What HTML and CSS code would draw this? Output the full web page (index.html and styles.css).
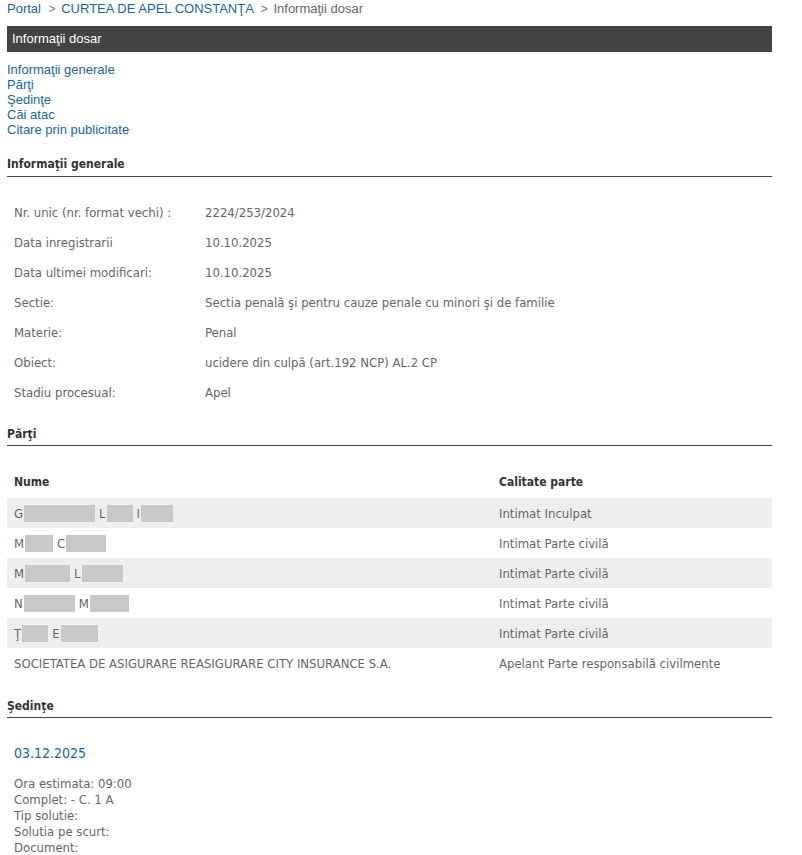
FILE: index.html
```html
<!DOCTYPE html>
<html lang="ro">
<head>
<meta charset="utf-8">
<title>Informaţii dosar</title>
<link rel="stylesheet" href="styles.css">
</head>
<body>
<div class="page">
  <div class="breadcrumb">
    <a href="#">Portal</a> <span class="sep">&gt;</span> <a href="#">CURTEA DE APEL CONSTANŢA</a> <span class="sep">&gt;</span> <span class="current">Informaţii dosar</span>
  </div>
  <div class="titlebar">Informaţii dosar</div>
  <ul class="toc">
    <li><a href="#">Informaţii generale</a></li>
    <li><a href="#">Părţi</a></li>
    <li><a href="#">Şedinţe</a></li>
    <li><a href="#">Căi atac</a></li>
    <li><a href="#">Citare prin publicitate</a></li>
  </ul>

  <h2 class="section-title first">Informaţii generale</h2>
  <table class="info">
    <tr><td class="label">Nr. unic (nr. format vechi) :</td><td>2224/253/2024</td></tr>
    <tr><td class="label">Data inregistrarii</td><td>10.10.2025</td></tr>
    <tr><td class="label">Data ultimei modificari:</td><td>10.10.2025</td></tr>
    <tr><td class="label">Sectie:</td><td>Sectia penală şi pentru cauze penale cu minori şi de familie</td></tr>
    <tr><td class="label">Materie:</td><td>Penal</td></tr>
    <tr><td class="label">Obiect:</td><td>ucidere din culpă (art.192 NCP) AL.2 CP</td></tr>
    <tr><td class="label">Stadiu procesual:</td><td>Apel</td></tr>
  </table>

  <h2 class="section-title">Părţi</h2>
  <table class="parti">
    <thead>
      <tr><th class="col-name">Nume</th><th>Calitate parte</th></tr>
    </thead>
    <tbody>
      <tr><td>G<span class="red w71"></span>L<span class="red w26"></span>I<span class="red w32"></span></td><td>Intimat Inculpat</td></tr>
      <tr><td>M<span class="red w28"></span>C<span class="red w40"></span></td><td>Intimat Parte civilă</td></tr>
      <tr><td>M<span class="red w45"></span>L<span class="red w41"></span></td><td>Intimat Parte civilă</td></tr>
      <tr><td>N<span class="red w51"></span>M<span class="red w39"></span></td><td>Intimat Parte civilă</td></tr>
      <tr><td>Ţ<span class="red w26"></span>E<span class="red w37"></span></td><td>Intimat Parte civilă</td></tr>
      <tr><td>SOCIETATEA DE ASIGURARE REASIGURARE CITY INSURANCE S.A.</td><td>Apelant Parte responsabilă civilmente</td></tr>
    </tbody>
  </table>

  <h2 class="section-title">Şedinţe</h2>
  <div class="sedinta">
    <div class="date">03.12.2025</div>
    <div class="details">
      Ora estimata: 09:00<br>
      Complet: - C. 1 A<br>
      Tip solutie:<br>
      Solutia pe scurt:<br>
      Document:
    </div>
  </div>
</div>
</body>
</html>
```

FILE: styles.css
```css
html, body {
  margin: 0;
  padding: 0;
  background: #fff;
}

.page {
  width: 765px;
  padding: 0 0 0 7px;
  font-family: "DejaVu Sans Condensed", "DejaVu Sans", sans-serif;
  font-stretch: condensed;
  color: #666;
}

a {
  color: #1a64a0;
  text-decoration: none;
}

.breadcrumb {
  font-family: "Liberation Sans", Arial, sans-serif;
  font-stretch: normal;
  font-size: 13px;
  line-height: 18px;
  height: 18px;
  color: #666;
}

.breadcrumb .sep {
  color: #777;
  font-size: 12px;
  padding: 0 2px 0 4px;
}

.breadcrumb .current {
  color: #666;
}

.titlebar {
  margin-top: 8px;
  height: 26px;
  line-height: 26px;
  background: #444;
  color: #fff;
  font-family: "Liberation Sans", Arial, sans-serif;
  font-stretch: normal;
  font-size: 13px;
  padding-left: 5px;
}

.toc {
  list-style: none;
  margin: 10px 0 0 0;
  padding: 0;
  font-family: "Liberation Sans", Arial, sans-serif;
  font-stretch: normal;
  font-size: 13px;
  line-height: 15px;
}

.section-title {
  margin: 0;
  font-size: 12px;
  font-weight: bold;
  color: #333;
  line-height: 16px;
  padding-bottom: 3px;
  border-bottom: 1px solid #444;
}

.section-title.first {
  margin-top: 19px;
  padding-bottom: 4px;
}

table {
  border-collapse: collapse;
  width: 765px;
  font-size: 13px;
}

td, th {
  padding: 0 0 0 7px;
  height: 30px;
  text-align: left;
  vertical-align: middle;
}

.info {
  margin-top: 20px;
  margin-bottom: 19px;
}

.info .label {
  width: 184px;
}

.parti {
  margin-top: 20px;
  margin-bottom: 20px;
}

.parti th {
  color: #333;
  font-weight: bold;
  font-size: 12px;
  height: 32px;
}

.parti .col-name {
  width: 478px;
}

.parti tbody tr:nth-child(odd) {
  background: #eee;
}

.red {
  display: inline-block;
  height: 17px;
  vertical-align: -4px;
  background: #c8c8c8;
  margin: 0 4px 0 1px;
}

.w26 { width: 26px; }
.w28 { width: 28px; }
.w32 { width: 32px; }
.w37 { width: 37px; }
.w39 { width: 39px; }
.w40 { width: 40px; }
.w41 { width: 41px; }
.w45 { width: 45px; }
.w51 { width: 51px; }
.w71 { width: 71px; }

.sedinta {
  padding-left: 7px;
}

.date {
  margin-top: 26px;
  color: #1a64a0;
  font-size: 14px;
  line-height: 18px;
}

.details {
  margin-top: 14px;
  font-size: 13px;
  line-height: 16px;
}
```
